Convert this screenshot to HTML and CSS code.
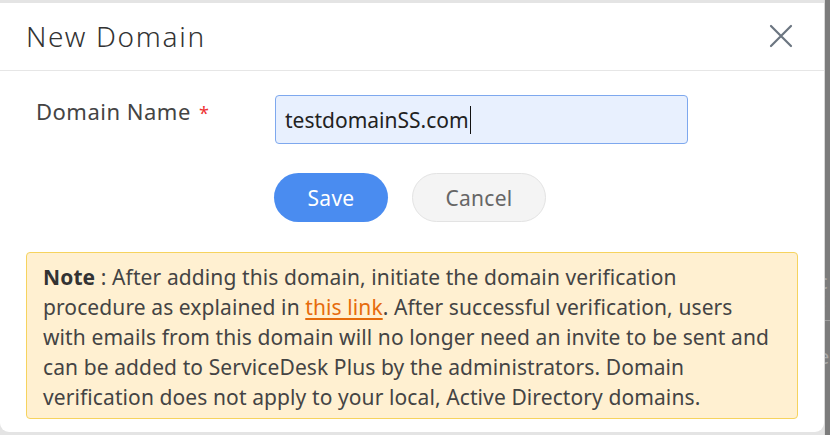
FILE: index.html
```html
<!DOCTYPE html>
<html>
<head>
<meta charset="utf-8">
<link rel="stylesheet" href="styles.css">
</head>
<body>
<div class="page">
  <div class="dialog">
    <div class="header">
      <h1 class="title">New Domain</h1>
      <button class="close" aria-label="Close">
        <svg width="24" height="24" viewBox="0 0 24 24"><path d="M2 2 L22 22 M22 2 L2 22" stroke="#6b7580" stroke-width="2.2" fill="none" stroke-linecap="round"/></svg>
      </button>
    </div>
    <div class="body">
      <div class="row">
        <label class="label">Domain Name <span class="req">*</span></label>
        <div class="input">testdomainSS.com<span class="caret"></span></div>
      </div>
      <div class="actions">
        <button class="btn save">Save</button>
        <button class="btn cancel">Cancel</button>
      </div>
      <div class="note">
        <b>Note</b> : After adding this domain, initiate the domain verification procedure as explained in <a class="link" href="#">this link</a>. After successful verification, users with emails from this domain will no longer need an invite to be sent and can be added to ServiceDesk Plus by the administrators. Domain verification does not apply to your local, Active Directory domains.
      </div>
    </div>
  </div>
  <div class="side">
    <span class="frag f1">c</span>
    <span class="frag f2">t</span>
    <span class="frag rule"></span>
    <span class="frag f3">e</span>
  </div>
</div>
</body>
</html>
```
FILE: styles.css
```css
* { box-sizing: border-box; }
html, body { margin: 0; padding: 0; }
body {
  background: #e4e4e4;
  font-family: "Noto Sans", "Open Sans", sans-serif;
  width: 830px;
  height: 435px;
  overflow: hidden;
}
.page {
  display: flex;
  height: 435px;
}
.dialog {
  width: 824px;
  height: 429px;
  margin-top: 3px;
  background: #fff;
  border-radius: 0 0 9px 9px;
  display: flex;
  flex-direction: column;
}
.side {
  width: 6px;
  height: 435px;
  background: #7c7c7c;
  border-left: 1px solid #d8d8d8;
  overflow: hidden;
  display: flex;
  flex-direction: column;
  color: #a9a9a9;
  font-size: 20px;
  line-height: 20px;
}
.frag { display: block; margin-left: -7px; }
.f1 { margin-top: 272px; }
.f2 { margin-top: -2px; }
.rule { height: 1px; background: #a0a0a0; margin-top: 10px; margin-left: 0; }
.f3 { margin-top: 26px; }
.header {
  height: 68px;
  border-bottom: 1px solid #e6e6e6;
  display: flex;
  align-items: center;
  justify-content: space-between;
  padding: 0 31px 0 26px;
}
.title {
  margin: 0;
  font-size: 28px;
  font-weight: 300;
  letter-spacing: 1.7px;
  color: #333;
  padding-bottom: 1px;
}
.close {
  border: 0;
  background: none;
  padding: 0;
  width: 24px;
  height: 24px;
  display: flex;
  margin-top: -2px;
}
.body {
  padding: 24px 26px 0 26px;
}
.row {
  display: flex;
  align-items: flex-start;
}
.label {
  width: 249px;
  padding-left: 10px;
  padding-top: 1px;
  font-size: 22px;
  letter-spacing: 0.5px;
  color: #444;
  line-height: 30px;
}
.req { color: #e33; font-size: 18px; margin-left: 2px; }
.input {
  width: 413px;
  height: 49px;
  background: #e8f0fe;
  border: 1px solid #7ea8ee;
  border-radius: 4px;
  padding: 0 9px;
  font-size: 21px;
  color: #222;
  display: flex;
  align-items: center;
}
.caret {
  display: inline-block;
  width: 1px;
  height: 28px;
  background: #111;
  margin-left: 1px;
}
.actions {
  display: flex;
  gap: 24px;
  padding-left: 248px;
  margin-top: 29px;
}
.btn {
  height: 49px;
  border-radius: 25px;
  font-family: "Noto Sans", "Open Sans", sans-serif;
  font-size: 21px;
  letter-spacing: 0.3px;
  padding: 0;
}
.save {
  width: 114px;
  background: #4a8cf0;
  border: 0;
  color: #fff;
}
.cancel {
  width: 134px;
  background: #f4f4f4;
  border: 1px solid #e3e3e3;
  color: #666;
}
.note {
  margin-top: 30px;
  width: 772px;
  height: 167px;
  background: #fff0d1;
  border: 1px solid #f6d35e;
  border-radius: 4px;
  padding: 9px 22px 0 16px;
  font-size: 21px;
  letter-spacing: 0.1px;
  line-height: 30px;
  color: #444;
}
.note b { color: #333; font-weight: 700; }
.link { color: #e66b0c; text-decoration: underline; text-underline-offset: 3px; }
```
